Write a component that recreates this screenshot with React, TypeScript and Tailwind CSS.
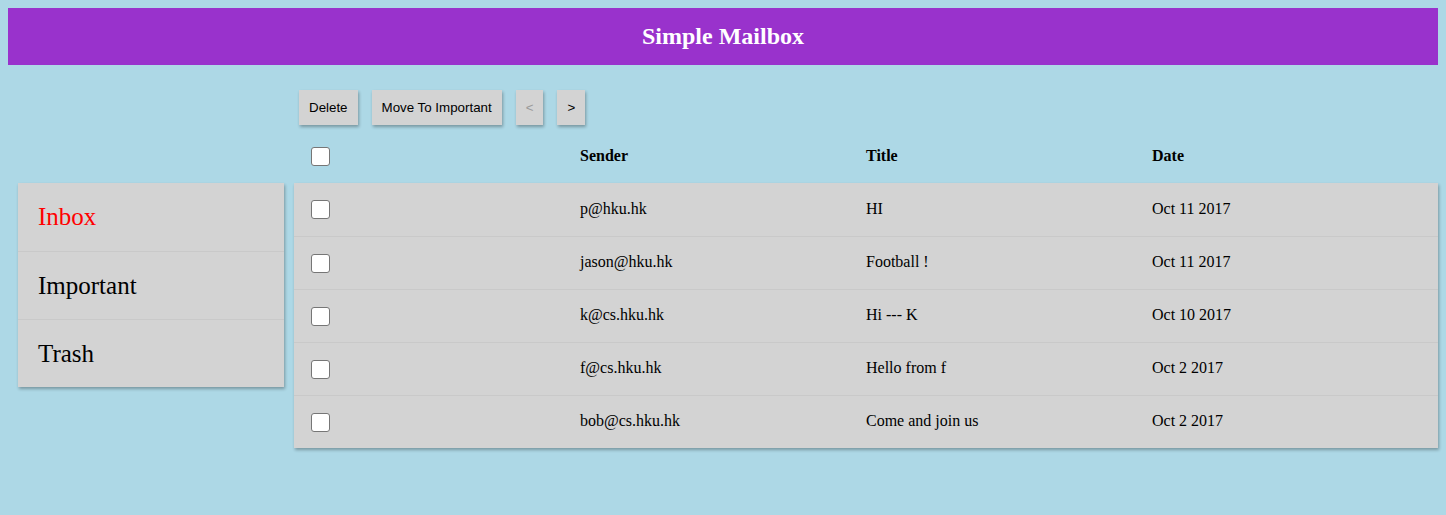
import { useState } from "react";

// Simple mailbox: folder list on the left, message table on the right.
const FOLDERS = ["Inbox", "Important", "Trash"];

interface Mail {
  sender: string;
  title: string;
  date: string;
}

const MAILS: Mail[] = [
  { sender: "p@hku.hk", title: "HI", date: "Oct 11 2017" },
  { sender: "jason@hku.hk", title: "Football !", date: "Oct 11 2017" },
  { sender: "k@cs.hku.hk", title: "Hi --- K", date: "Oct 10 2017" },
  { sender: "f@cs.hku.hk", title: "Hello from f", date: "Oct 2 2017" },
  { sender: "bob@cs.hku.hk", title: "Come and join us", date: "Oct 2 2017" },
];

const Box = () => (
  <span className="block w-[19px] h-[19px] rounded-[3px] border border-[#767676] bg-white"></span>
);

const Btn = ({ label, dim }: { label: string; dim?: boolean }) => (
  <button
    className={`h-[35px] px-[10px] bg-[#d3d3d3] text-[13.33px] shadow-[1px_2px_3px_rgba(0,0,0,0.3)] ${
      dim ? "text-[#9a9a9a]" : "text-black"
    }`}
    style={{ fontFamily: "Arial, 'Liberation Sans', sans-serif" }}
  >
    {label}
  </button>
);

export default function App() {
  const [folder] = useState("Inbox");

  return (
    <div
      className="min-h-screen bg-[#add8e6] p-2"
      style={{ fontFamily: "'Liberation Serif', 'Times New Roman', serif" }}
    >
      <div className="h-[57px] bg-[#9932cc] flex items-center justify-center pb-[2px]">
        <h1 className="text-white text-[24px] font-bold">Simple Mailbox</h1>
      </div>

      <div className="flex gap-[10px] pl-[10px] mt-[25px]">
        <div className="w-[266px] pt-[93px] shrink-0">
          <ul className="bg-[#d3d3d3] shadow-[1px_2px_3px_rgba(0,0,0,0.3)]">
            {FOLDERS.map((f, i) => (
              <li
                key={f}
                className={`h-[68px] flex items-center pl-[20px] text-[25px] ${
                  i > 0 ? "border-t border-[#c9c9c9]" : ""
                } ${f === folder ? "text-[#ff0000]" : "text-black"}`}
              >
                {f}
              </li>
            ))}
          </ul>
        </div>

        <div className="flex-1">
          <div className="flex gap-[14px] pl-[5px] h-[35px]">
            <Btn label="Delete" />
            <Btn label="Move To Important" />
            <Btn label="<" dim />
            <Btn label=">" />
          </div>

          <div className="grid grid-cols-4 h-[53px] items-center mt-[5px] text-[16px] font-bold">
            <div className="pl-[17px]">
              <Box />
            </div>
            <div className="mb-[2px]">Sender</div>
            <div className="mb-[2px]">Title</div>
            <div className="mb-[2px]">Date</div>
          </div>

          <div className="bg-[#d3d3d3] shadow-[1px_2px_3px_rgba(0,0,0,0.3)]">
            {MAILS.map((m, i) => (
              <div
                key={i}
                className={`grid grid-cols-4 h-[53px] items-center text-[16px] ${
                  i > 0 ? "border-t border-[#c9c9c9]" : ""
                }`}
              >
                <div className="pl-[17px]">
                  <Box />
                </div>
                <div className="mb-[2px]">{m.sender}</div>
                <div className="mb-[2px]">{m.title}</div>
                <div className="mb-[2px]">{m.date}</div>
              </div>
            ))}
          </div>
        </div>
      </div>
    </div>
  );
}
